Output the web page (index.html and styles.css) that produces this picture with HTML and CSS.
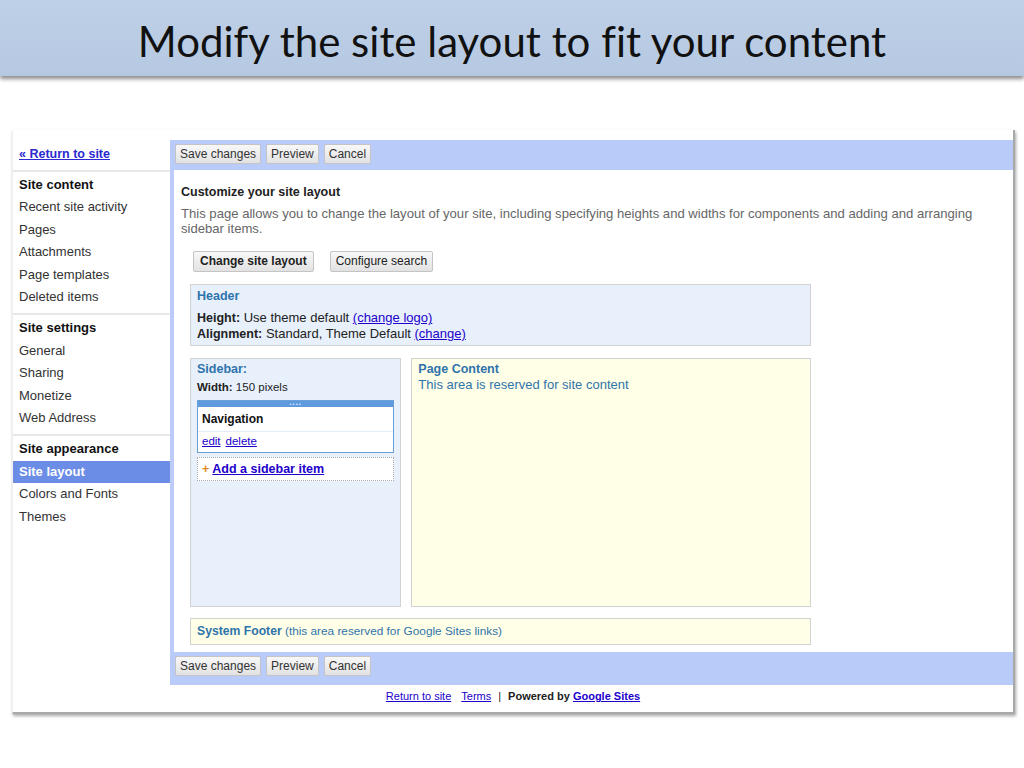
FILE: index.html
```html
<!DOCTYPE html>
<html>
<head>
<meta charset="utf-8">
<link rel="stylesheet" href="styles.css">
</head>
<body>
<header class="slide-title">Modify the site layout to fit your content</header>
<div class="shot">
  <div class="shot-row">
    <nav class="nav">
      <div class="nav-return"><a href="#">« Return to site</a></div>
      <div class="nav-section">
        <div class="nav-head">Site content</div>
        <div class="nav-item">Recent site activity</div>
        <div class="nav-item">Pages</div>
        <div class="nav-item">Attachments</div>
        <div class="nav-item">Page templates</div>
        <div class="nav-item">Deleted items</div>
      </div>
      <div class="nav-section">
        <div class="nav-head">Site settings</div>
        <div class="nav-item">General</div>
        <div class="nav-item">Sharing</div>
        <div class="nav-item">Monetize</div>
        <div class="nav-item">Web Address</div>
      </div>
      <div class="nav-section">
        <div class="nav-head">Site appearance</div>
        <div class="nav-item active">Site layout</div>
        <div class="nav-item">Colors and Fonts</div>
        <div class="nav-item">Themes</div>
      </div>
    </nav>
    <main class="main">
      <div class="toolbar">
        <span class="btn">Save changes</span><span class="btn">Preview</span><span class="btn">Cancel</span>
      </div>
      <div class="content">
        <h1 class="page-title">Customize your site layout</h1>
        <p class="desc">This page allows you to change the layout of your site, including specifying heights and widths for components and adding and arranging sidebar items.</p>
        <div class="actions">
          <span class="btn big bold">Change site layout</span>
          <span class="btn big">Configure search</span>
        </div>
        <div class="layout">
          <div class="box header-box">
            <div class="box-title">Header</div>
            <div class="hb-line"><b>Height:</b> Use theme default <a href="#">(change logo)</a></div>
            <div class="hb-line"><b>Alignment:</b> Standard, Theme Default <a href="#">(change)</a></div>
          </div>
          <div class="layout-row">
            <div class="box sidebar-box">
              <div class="box-title">Sidebar:</div>
              <div class="sb-width"><b>Width:</b> 150 pixels</div>
              <div class="widget">
                <div class="widget-grip">••••</div>
                <div class="widget-name">Navigation</div>
                <div class="widget-links"><a href="#">edit</a><a href="#">delete</a></div>
              </div>
              <div class="add-item"><span class="plus">+</span> <a href="#">Add a sidebar item</a></div>
            </div>
            <div class="box content-box">
              <div class="box-title">Page Content</div>
              <div class="cb-text">This area is reserved for site content</div>
            </div>
          </div>
          <div class="box footer-box"><b>System Footer</b> (this area reserved for Google Sites links)</div>
        </div>
      </div>
      <div class="toolbar bottom">
        <span class="btn">Save changes</span><span class="btn">Preview</span><span class="btn">Cancel</span>
      </div>
    </main>
  </div>
  <footer class="shot-footer">
    <a href="#">Return to site</a><a class="gap" href="#">Terms</a><span class="sep">|</span><b>Powered by <a href="#">Google Sites</a></b>
  </footer>
</div>
</body>
</html>
```
FILE: styles.css
```css
* { box-sizing: border-box; }
html, body { margin: 0; padding: 0; background: #fff; }
body { font-family: "Liberation Sans", Arial, sans-serif; color: #222; min-height: 768px; }

.slide-title {
  height: 76px;
  background: linear-gradient(#bdd0e7, #b6c9e2);
  box-shadow: 0 3px 4px rgba(0,0,0,0.45);
  font-family: Lato, "Open Sans", sans-serif;
  font-variant-ligatures: none;
  font-size: 42px;
  color: #111;
  text-align: center;
  line-height: 82px;
}

.shot {
  margin: 54px 0 0 12px;
  width: 1003px;
  height: 584px;
  padding-top: 10px;
  background: #fff;
  border-left: 1px solid #f0f0f0;
  border-bottom: 2px solid #a9a9a9;
  border-right: 2px solid #a9a9a9;
  box-shadow: 1px 2px 3px rgba(0,0,0,0.35);
  display: flex;
  flex-direction: column;
}
.shot-row { display: flex; height: 545px; }

a { color: #2200cc; text-decoration: underline; }

/* nav */
.nav { width: 157px; font-size: 13px; color: #333; }
.nav-return { height: 30px; padding: 7px 6px 0; font-weight: bold; font-size: 12.5px; }
.nav-return a { color: #2a2ad0; }
.nav-section { border-top: 2px solid #e8e8e8; padding: 2px 0 5px; }
.nav-section:first-of-type { padding-top: 1px; }
.nav-head, .nav-item { line-height: 22.4px; padding-left: 6px; }
.nav-head { font-weight: bold; color: #111; }
.nav-item.active { background: #6b8de6; color: #fff; font-weight: bold; }

/* main */
.main {
  flex: 1;
  display: flex;
  flex-direction: column;
  border-left: 4px solid #bccbf8;
}
.toolbar {
  height: 30px;
  background: #b9cbf9;
  margin-left: -4px;
  padding: 4px 5px;
  display: flex;
  gap: 5px;
}
.toolbar.bottom { height: 33px; }
.btn {
  display: inline-block;
  height: 20px;
  line-height: 18px;
  padding: 0 4px;
  font-size: 12px;
  color: #333;
  background: linear-gradient(#f8f8f8, #e2e2e2);
  border: 1px solid #c4c4c4;
  border-radius: 2px;
}
.btn.big { height: 21px; line-height: 19px; padding: 0 5px; color: #222; }
.btn.bold { font-weight: bold; padding: 0 6px; }

.content { flex: 1; padding: 15px 30px 0 7px; }
.page-title { margin: 0; font-size: 12.5px; font-weight: bold; line-height: 15px; color: #222; }
.desc { margin: 6px 0 0; font-size: 13.1px; line-height: 15px; color: #666; }
.actions { display: flex; gap: 16px; margin: 15px 0 0 12px; }

.layout { width: 621px; margin: 12px 0 0 9px; display: flex; flex-direction: column; gap: 11px; }
.box { border: 1px solid #d2d2d2; font-size: 13px; }
.box-title { font-weight: bold; color: #2f74ab; font-size: 12.5px; }
.header-box { height: 62px; background: #e8f0fb; padding: 3px 6px; }
.header-box .box-title { line-height: 17px; margin-bottom: 5px; }
.hb-line { line-height: 16px; color: #222; font-size: 13px; }
.hb-line b { font-size: 12.5px; }

.layout-row { display: flex; gap: 10px; margin-top: 1px; }
.sidebar-box { width: 212px; height: 249px; background: #e8f0fb; padding: 2px 6px; }
.sidebar-box .box-title { line-height: 16px; }
.sb-width { font-size: 11.5px; line-height: 20px; color: #222; }
.widget { margin-top: 3px; border: 1px solid #6a9fd8; background: #fff; height: 53px; }
.widget-grip { height: 6px; background: #5d9ade; color: #d8e8fa; font-size: 6px; line-height: 6px; text-align: center; letter-spacing: 1px; }
.widget-name { font-weight: bold; line-height: 24px; padding-left: 4px; font-size: 12px; border-bottom: 1px solid #e4ecf6; color: #111; }
.widget-links { font-size: 11.5px; line-height: 18px; padding-left: 4px; display: flex; gap: 5px; }
.add-item {
  margin-top: 4px; height: 24px; border: 1px dotted #aaa; background: #fff;
  padding-left: 4px; line-height: 22px; font-weight: bold; font-size: 12.5px;
}
.plus { color: #e08a1e; font-weight: bold; }
.content-box { width: 401px; height: 249px; background: #fffee6; padding: 2px 6px; color: #2f74ab; }
.content-box .box-title { line-height: 16px; }
.cb-text { line-height: 16px; }
.footer-box { height: 27px; background: #fffee6; padding: 0 6px; line-height: 25px; color: #2f74ab; font-size: 11.8px; }
.footer-box b { font-size: 12.2px; }

.shot-footer { height: 27px; line-height: 22px; text-align: center; font-size: 11px; color: #222; }
.shot-footer a { color: #2200cc; }
.shot-footer .gap { margin-left: 10px; }
.shot-footer .sep { margin: 0 7px; }
```
